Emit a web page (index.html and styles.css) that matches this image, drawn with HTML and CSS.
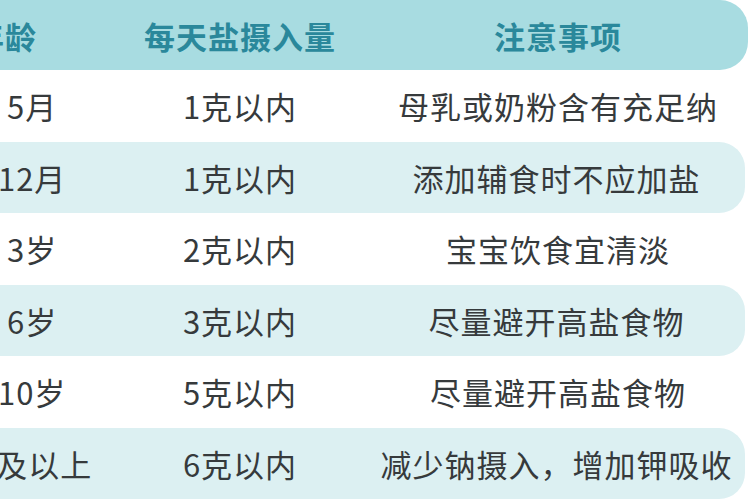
FILE: index.html
```html
<!DOCTYPE html>
<html lang="zh-CN">
<head>
<meta charset="utf-8">
<title>每天盐摄入量</title>
<link rel="stylesheet" href="styles.css">
</head>
<body>
<div class="table">
  <div class="row head">
    <div class="c1">年龄</div>
    <div class="c2">每天盐摄入量</div>
    <div class="c3">注意事项</div>
  </div>
  <div class="row">
    <div class="c1">0~ 5月</div>
    <div class="c2">1克以内</div>
    <div class="c3">母乳或奶粉含有充足纳</div>
  </div>
  <div class="row alt">
    <div class="c1">6~ 12月</div>
    <div class="c2">1克以内</div>
    <div class="c3">添加辅食时不应加盐</div>
  </div>
  <div class="row">
    <div class="c1">1~ 3岁</div>
    <div class="c2">2克以内</div>
    <div class="c3">宝宝饮食宜清淡</div>
  </div>
  <div class="row alt">
    <div class="c1">4~ 6岁</div>
    <div class="c2">3克以内</div>
    <div class="c3">尽量避开高盐食物</div>
  </div>
  <div class="row">
    <div class="c1">7~ 10岁</div>
    <div class="c2">5克以内</div>
    <div class="c3">尽量避开高盐食物</div>
  </div>
  <div class="row alt">
    <div class="c1">11岁及以上</div>
    <div class="c2">6克以内</div>
    <div class="c3">减少钠摄入，增加钾吸收</div>
  </div>
</div>
</body>
</html>
```
FILE: styles.css
```css
html, body {
  margin: 0;
  padding: 0;
  background: #ffffff;
}
body {
  width: 750px;
  height: 500px;
  overflow: hidden;
  font-family: "Noto Sans CJK SC", "Noto Sans", sans-serif;
}
.table {
  margin-left: -124px;
  width: 872px;
  display: flex;
  flex-direction: column;
}
.row {
  display: grid;
  grid-template-columns: 268px 192px 1fr;
  align-items: center;
  height: 71.5px;
  font-size: 31px;
  letter-spacing: 1px;
  color: #363a3c;
  white-space: pre;
}
.row > div {
  text-align: center;
}
.row .c3 {
  padding-left: 32px;
}
.head {
  height: 70px;
  background: #a8dce1;
  color: #2a889b;
  font-weight: 700;
  border-radius: 0 28px 28px 0;
}
.head .c1 {
  padding-right: 10px;
}
.alt {
  background: #dcf0f2;
  border-radius: 0 26px 26px 0;
  margin-right: 3px;
}
```
